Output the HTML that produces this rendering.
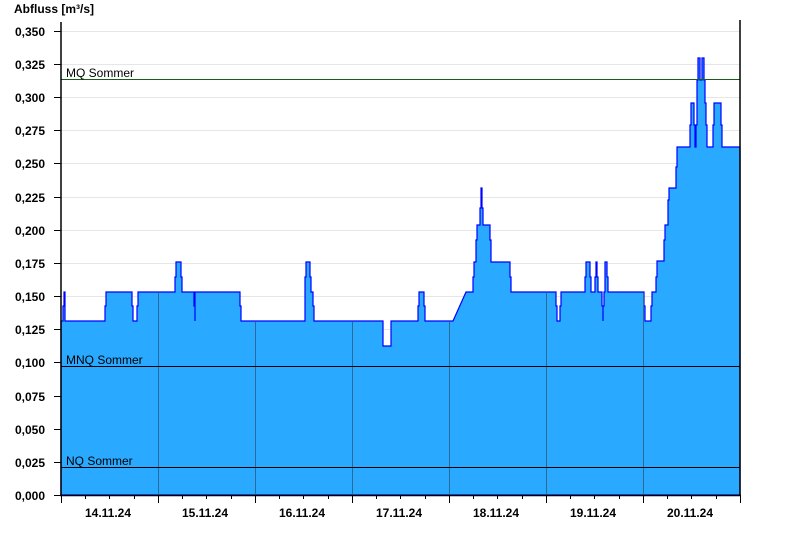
<!DOCTYPE html><html><head><style>body{margin:0;background:#fff}svg{display:block}text{font-family:"Liberation Sans",Arial,sans-serif;font-size:12px}</style></head><body>
<svg width="800" height="550" viewBox="0 0 800 550" xmlns="http://www.w3.org/2000/svg">
<rect width="800" height="550" fill="#fff"/>
<text x="14" y="13" font-weight="bold" font-size="13">Abfluss [m³/s]</text>
<g stroke="#e6e6e6" stroke-width="1">
<line x1="61" x2="740" y1="31.5" y2="31.5"/><line x1="61" x2="740" y1="64.5" y2="64.5"/><line x1="61" x2="740" y1="97.5" y2="97.5"/><line x1="61" x2="740" y1="130.5" y2="130.5"/><line x1="61" x2="740" y1="163.5" y2="163.5"/><line x1="61" x2="740" y1="197.5" y2="197.5"/><line x1="61" x2="740" y1="230.5" y2="230.5"/><line x1="61" x2="740" y1="263.5" y2="263.5"/><line x1="61" x2="740" y1="296.5" y2="296.5"/><line x1="61" x2="740" y1="329.5" y2="329.5"/>
</g>
<path fill="#29a9ff" stroke="#0000ff" stroke-width="1.2" d="M61,495 L61,321 H63 V306 H64 V292 H65 V321 H105 V306 H106 V292 H132 V306 H133 V321 H137 V306 H138 V292 H175 V277 H176 V262 H181 V277 H182 V292 H194 V306 H195 V321 V292 H196 V292 H240 V306 H241 V321 H305 V277 H306 V262 H310 V277 H311 V292 H313 V306 H314 V321 H383 V346 H391 V321 H418 V306 H419 V292 H424 V306 H425 V321 H453 L466,292 H473 V277 H474 V262 H476 V240 H477 V225 H480 V208 H481 V188 H482 V208 H483 V225 H490 V240 H491 V262 H510 V277 H511 V292 H556 V306 H557 V321 H560 V306 H561 V292 H585 V277 H586 V262 H590 V277 H591 V292 H595 V277 H596 V262 H597 V277 H598 V292 H602 V306 H603 V321 V306 H604 V292 H605 V262 H607 V277 H608 V292 H644 V306 H645 V321 H651 V306 H652 V292 H656 V277 H657 V261 H664 V240 H665 V225 H668 V200 H669 V188 H676 V167 H677 V147 H690 V125 H691 V103 H694 V125 H695 V147 H696 V125 H697 V80 H698 V58 H700 V80 H702 V58 H704 V80 H705 V103 H706 V125 H707 V147 H713 V125 H714 V103 H721 V125 H722 V147 H740 V495 Z"/>
<g stroke="#2a6a96" stroke-width="1">
<line x1="158.5" x2="158.5" y1="293" y2="495"/><line x1="255.5" x2="255.5" y1="322" y2="495"/><line x1="352.5" x2="352.5" y1="322" y2="495"/><line x1="449.5" x2="449.5" y1="322" y2="495"/><line x1="546.5" x2="546.5" y1="293" y2="495"/><line x1="643.5" x2="643.5" y1="293" y2="495"/>
</g>
<line x1="61" x2="740" y1="79.5" y2="79.5" stroke="#1a5a1a"/>
<line x1="61" x2="740" y1="366.5" y2="366.5" stroke="#000"/>
<line x1="61" x2="740" y1="467.5" y2="467.5" stroke="#000"/>
<text x="66" y="77">MQ Sommer</text>
<text x="66" y="364">MNQ Sommer</text>
<text x="66" y="465">NQ Sommer</text>
<g stroke="#000" stroke-width="1.5">
<line x1="61" x2="61" y1="22" y2="496"/><line x1="740" x2="740" y1="20" y2="496"/><line x1="60" x2="741" y1="495.5" y2="495.5"/>
</g>
<g stroke="#000" stroke-width="1">
<path d="M54,31.5H61M54,64.5H61M54,97.5H61M54,130.5H61M54,163.5H61M54,197.5H61M54,230.5H61M54,263.5H61M54,296.5H61M54,329.5H61M54,362.5H61M54,396.5H61M54,429.5H61M54,462.5H61M54,495.5H61"/>
<path d="M61.5,495V503M158.5,495V503M255.5,495V503M352.5,495V503M449.5,495V503M546.5,495V503M643.5,495V503M740.5,495V503"/>
<path d="M85.5,495V499M109.5,495V499M134.5,495V499M182.5,495V499M206.5,495V499M231.5,495V499M279.5,495V499M303.5,495V499M328.5,495V499M376.5,495V499M400.5,495V499M425.5,495V499M473.5,495V499M497.5,495V499M522.5,495V499M570.5,495V499M594.5,495V499M619.5,495V499M667.5,495V499M691.5,495V499M716.5,495V499"/>
</g>
<g font-weight="bold" text-anchor="end">
<text x="45" y="36">0,350</text><text x="45" y="69">0,325</text><text x="45" y="102">0,300</text><text x="45" y="135">0,275</text><text x="45" y="168">0,250</text><text x="45" y="202">0,225</text><text x="45" y="235">0,200</text><text x="45" y="268">0,175</text><text x="45" y="301">0,150</text><text x="45" y="334">0,125</text><text x="45" y="367">0,100</text><text x="45" y="401">0,075</text><text x="45" y="434">0,050</text><text x="45" y="467">0,025</text><text x="45" y="500">0,000</text>
</g>
<g font-weight="bold" text-anchor="middle">
<text x="108" y="517">14.11.24</text><text x="205" y="517">15.11.24</text><text x="302" y="517">16.11.24</text><text x="399" y="517">17.11.24</text><text x="496" y="517">18.11.24</text><text x="593" y="517">19.11.24</text><text x="690" y="517">20.11.24</text>
</g>
</svg>
</body></html>
